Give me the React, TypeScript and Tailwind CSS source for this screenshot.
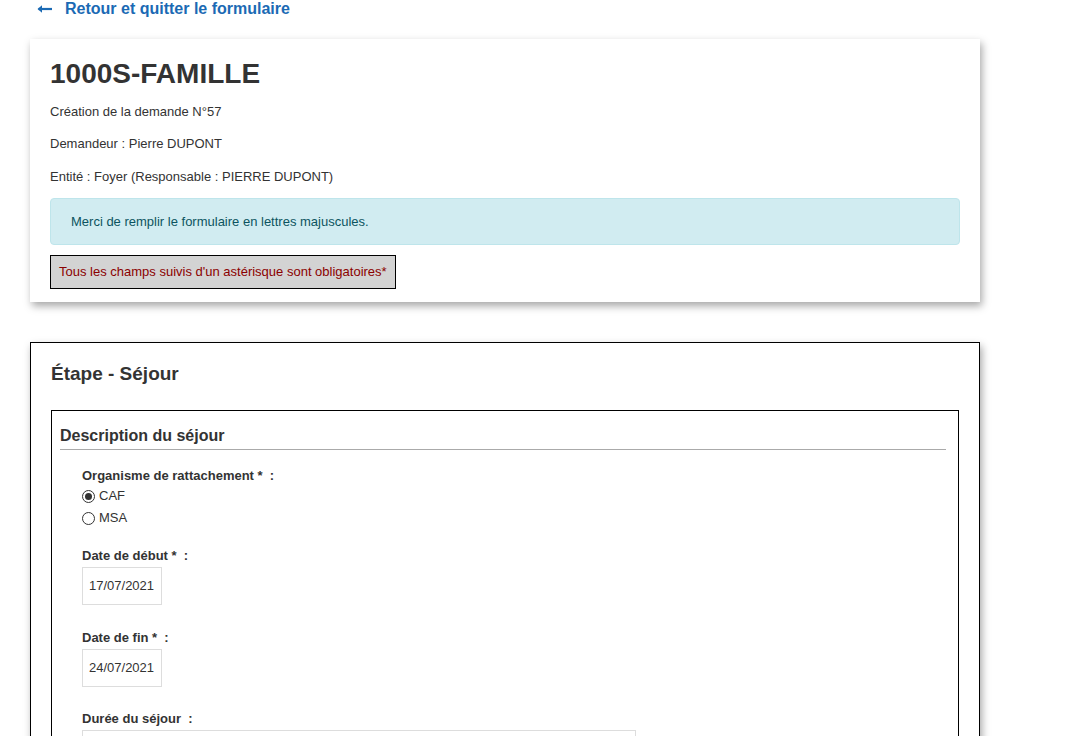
import React from 'react';

const font = { fontFamily: '"Liberation Sans", Arial, sans-serif' };

function Radio({ label, checked }: { label: string; checked?: boolean }) {
  return (
    <label className="flex items-center h-[22px] text-[13px] text-[#333]">
      <span className="w-[13px] h-[13px] rounded-full border border-[#333] flex items-center justify-center mr-[4px] bg-white">
        {checked && <span className="w-[7px] h-[7px] rounded-full bg-[#333]" />}
      </span>
      {label}
    </label>
  );
}

function DateField({ label, value }: { label: string; value: string }) {
  return (
    <div>
      <div className="text-[13px] leading-[16px] font-bold text-[#333]">
        {label} *&nbsp;&nbsp;:
      </div>
      <div className="mt-[3px] w-[80px] h-[38px] border border-[#ddd] flex items-center pl-[6px] text-[13px] text-[#333]">
        {value}
      </div>
    </div>
  );
}

export default function App() {
  return (
    <div className="min-h-screen bg-white pb-10" style={font}>
      {/* back link */}
      <a className="flex items-center h-[17px] pl-[37px] text-[16px] font-bold text-[#1b6ab4] cursor-pointer">
        <svg width="15" height="10" viewBox="0 0 15 10" className="mr-[13px]">
          <path d="M1.5 5H15" stroke="currentColor" strokeWidth="2.2" />
          <path d="M0.5 5L5 1.2V8.8Z" fill="currentColor" />
        </svg>
        Retour et quitter le formulaire
      </a>

      {/* header card */}
      <div className="ml-[30px] mt-[22px] w-[950px] bg-white shadow-[2px_4px_8px_rgba(0,0,0,0.35)] px-[20px] pt-[19px] pb-[13px]">
        <h1 className="text-[28px] leading-[32px] font-bold text-[#333]">1000S-FAMILLE</h1>
        <p className="mt-[13px] text-[13px] leading-[18px] text-[#333]">Création de la demande N°57</p>
        <p className="mt-[14px] text-[13px] leading-[18px] text-[#333]">Demandeur : Pierre DUPONT</p>
        <p className="mt-[15px] text-[13px] leading-[18px] text-[#333]">Entité : Foyer (Responsable : PIERRE DUPONT)</p>
        <div className="mt-[12px] h-[47px] flex items-center px-[20px] bg-[#d1ecf1] border border-[#bee5eb] rounded-[4px] text-[13px] text-[#0c5460]">
          Merci de remplir le formulaire en lettres majuscules.
        </div>
        <div className="mt-[10px] inline-flex items-center h-[34px] px-[8px] bg-[#d3d3d3] border border-black text-[13px] text-[#8b0000]">
          Tous les champs suivis d'un astérisque sont obligatoires*
        </div>
      </div>

      {/* step card */}
      <div className="ml-[30px] mt-[40px] w-[950px] bg-white border border-black shadow-[2px_4px_8px_rgba(0,0,0,0.35)] px-[20px] pt-[19px] pb-[20px]">
        <h2 className="text-[19px] leading-[24px] font-bold text-[#333]">Étape - Séjour</h2>
        <div className="mt-[24px] border border-black pl-[8px] pr-[12px] pt-[15px] pb-[20px]">
          <h3 className="text-[16px] leading-[20px] font-bold text-[#333] pb-[3px] border-b border-[#aaa]">
            Description du séjour
          </h3>
          <div className="pl-[22px]">
            <div className="mt-[18px] text-[13px] leading-[16px] font-bold text-[#333]">
              Organisme de rattachement *&nbsp;&nbsp;:
            </div>
            <div className="mt-[1px]">
              <Radio label="CAF" checked />
              <Radio label="MSA" />
            </div>
            <div className="mt-[19px]">
              <DateField label="Date de début" value="17/07/2021" />
            </div>
            <div className="mt-[25px]">
              <DateField label="Date de fin" value="24/07/2021" />
            </div>
            <div className="mt-[24px]">
              <div className="text-[13px] leading-[16px] font-bold text-[#333]">Durée du séjour&nbsp;&nbsp;:</div>
              <div className="mt-[3px] w-[554px] h-[38px] border border-[#ddd]" />
            </div>
          </div>
        </div>
      </div>
    </div>
  );
}
